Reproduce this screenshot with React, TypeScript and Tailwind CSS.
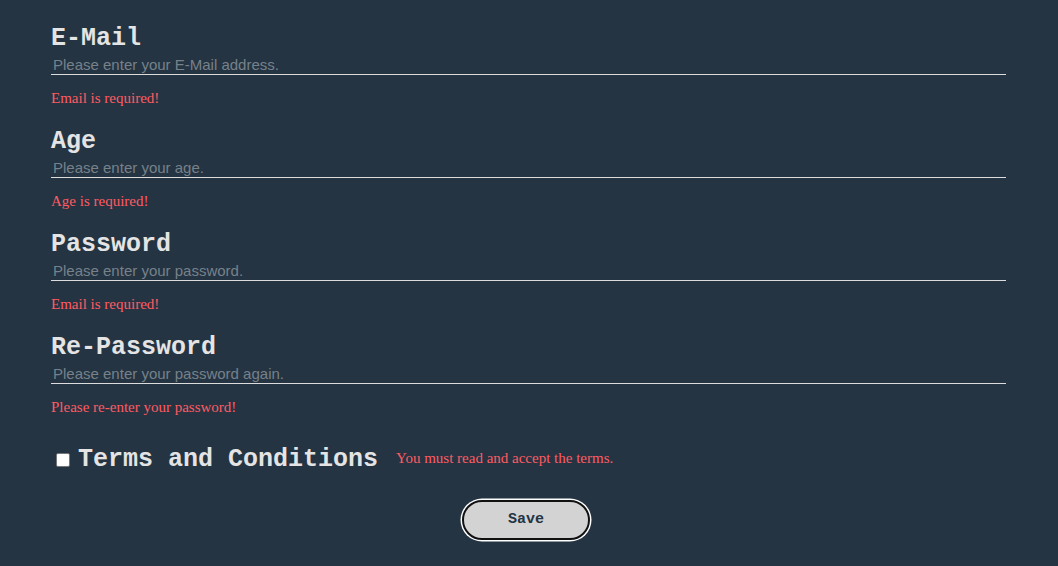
import React from "react";

const mono = { fontFamily: '"Liberation Mono", "Courier New", monospace' };

function Field({ label, placeholder, error, type = "text" }: { label: string; placeholder: string; error: string; type?: string }) {
  return (
    <div className="flex flex-col">
      <label className="text-[25px] font-bold leading-[28px] text-[#e4e4e4]" style={mono}>{label}</label>
      <input
        type={type}
        placeholder={placeholder}
        className="mt-[2px] h-[20px] w-[955px] border-b border-[#dcdcdc] bg-transparent px-[2px] text-[15px] leading-[20px] text-white outline-none placeholder:text-[#77818a] font-['Liberation_Sans',Arial,sans-serif]"
      />
      <div className="mt-[14px] h-[18px] text-[15px] leading-[18px] text-[#ff5b63] font-['Liberation_Serif','Times_New_Roman',serif]">{error}</div>
    </div>
  );
}

export default function App() {
  return (
    <div className="min-h-[566px] w-full bg-[#243442] pl-[51px] pt-[25px]">
      <div className="flex flex-col gap-[21px]">
        <Field label="E-Mail" placeholder="Please enter your E-Mail address." error="Email is required!" />
        <Field label="Age" placeholder="Please enter your age." error="Age is required!" />
        <Field label="Password" placeholder="Please enter your password." error="Email is required!" type="password" />
        <Field label="Re-Password" placeholder="Please enter your password again." error="Please re-enter your password!" type="password" />
      </div>
      <div className="mt-[30px] flex items-center">
        <div className="ml-[5px] h-[14px] w-[14px] rounded-[2px] border border-[#767676] bg-white" />
        <span className="ml-[8px] text-[25px] font-bold leading-[28px] text-[#e4e4e4]" style={mono}>Terms and Conditions</span>
        <span className="mb-[4px] ml-[18px] text-[15px] leading-[18px] text-[#ff5b63] font-['Liberation_Serif','Times_New_Roman',serif]">You must read and accept the terms.</span>
      </div>
      <div className="mt-[26px] flex w-[950px] justify-center">
        <button className="h-[40px] w-[128px] rounded-full border-2 border-[#111] bg-[#d3d3d3] text-[15px] font-bold text-[#243442] shadow-[0_0_0_1.5px_#ffffff]" style={mono}>Save</button>
      </div>
    </div>
  );
}
